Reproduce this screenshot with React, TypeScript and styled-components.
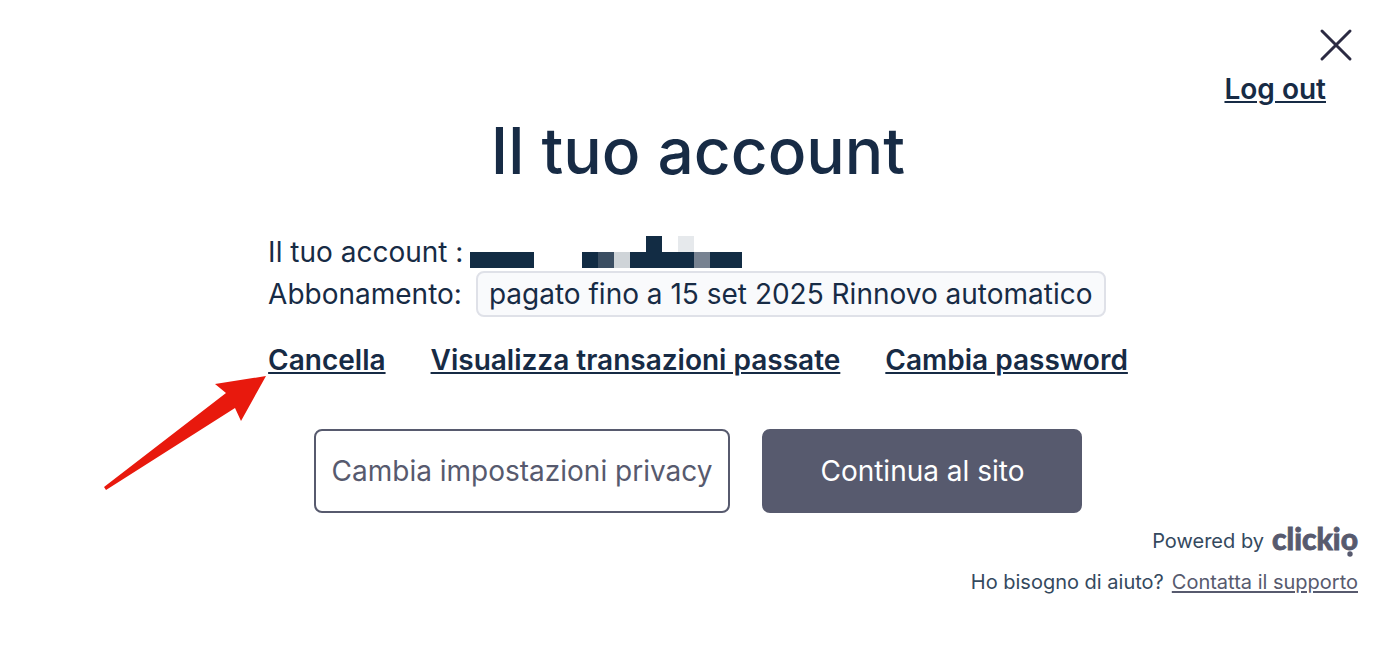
import React from "react";
import styled, { createGlobalStyle } from "styled-components";

const navy = "#172b45";
const slate = "#575a6e";

const GlobalStyle = createGlobalStyle`
  *, *::before, *::after { box-sizing: border-box; }
  body {
    margin: 0;
    background: #fff;
    color: ${navy};
    font-family: Inter, "Liberation Sans", sans-serif;
    font-size: 28px;
    line-height: 34px;
  }
`;

const Dialog = styled.main`
  display: flex;
  flex-direction: column;
  padding: 28px 24px 48px 38px;
`;

const TopBar = styled.header`
  display: flex;
  flex-direction: column;
  align-items: flex-end;
  gap: 10px;
`;

const CloseButton = styled.button`
  display: block;
  margin-right: 5px;
  padding: 0;
  border: 0;
  background: none;
  line-height: 0;
  cursor: pointer;
`;

const TextLink = styled.a`
  color: ${navy};
  font-weight: 600;
  text-decoration: underline;
  text-decoration-thickness: 2px;
  text-underline-offset: 2px;
  white-space: nowrap;
`;

const LogOut = styled(TextLink)`
  margin-right: 32px;
`;

const Title = styled.h1`
  margin: 6px 0 45px;
  font-size: 64px;
  font-weight: 500;
  line-height: 78px;
  text-align: center;
`;

const Account = styled.section`
  position: relative;
  display: flex;
  flex-direction: column;
  gap: 2px;
  align-self: center;
`;

const Row = styled.div`
  display: flex;
  align-items: center;
  white-space: nowrap;
`;

const Redacted = styled.svg`
  display: block;
  margin-left: 7px;
`;

const Status = styled.span`
  margin-left: 14px;
  padding: 4px 11px;
  border: 2px solid #dfe1e8;
  border-radius: 8px;
  background: #f9fafc;
`;

const Links = styled.nav`
  display: flex;
  gap: 45px;
  margin-top: 24px;
`;

const Pointer = styled.svg`
  position: absolute;
  right: 100%;
  bottom: -114px;
`;

const Actions = styled.div`
  display: flex;
  justify-content: center;
  gap: 32px;
  margin-top: 52px;
`;

const Button = styled.button<{ $filled?: boolean }>`
  min-width: 320px;
  padding: 23px 16px;
  border: 2px solid ${slate};
  border-radius: 8px;
  background: ${(p) => (p.$filled ? slate : "#fff")};
  color: ${(p) => (p.$filled ? "#fff" : slate)};
  font: inherit;
  cursor: pointer;
`;

const Footer = styled.footer`
  display: flex;
  flex-direction: column;
  align-items: flex-end;
  gap: 9px;
  margin-top: 10px;
  color: #34495e;
  font-size: 20px;
  line-height: 28px;
`;

const FooterLine = styled.div`
  display: flex;
  align-items: center;
  gap: 8px;
`;

const SupportLink = styled.a`
  color: ${slate};
  text-decoration: underline;
  text-decoration-thickness: 2px;
  text-underline-offset: 2px;
`;

const Brand = styled.svg`
  display: block;
  overflow: visible;
  fill: ${slate};
  font-family: Lato, sans-serif;
  font-size: 30px;
  font-weight: 900;
  line-height: 36px;
`;

const mosaic = [
  [0, 1, 4, "#122c44"],
  [7, 1, 1, "#122c44"],
  [8, 1, 1, "#3b4e62"],
  [9, 1, 1, "#cfd4d8"],
  [10, 1, 4, "#122c44"],
  [14, 1, 1, "#778291"],
  [15, 1, 2, "#122c44"],
  [11, 0, 1, "#122c44"],
  [13, 0, 1, "#e6e9ec"],
] as const;

export default function App() {
  return (
    <>
      <GlobalStyle />
      <Dialog>
        <TopBar>
          <CloseButton aria-label="Chiudi">
            <svg width="34" height="34" viewBox="0 0 34 34" fill="none" stroke="#2b2a42" strokeWidth="3" strokeLinecap="round">
              <path d="M3 3 31 31M31 3 3 31" />
            </svg>
          </CloseButton>
          <LogOut href="#logout">Log out</LogOut>
        </TopBar>
        <Title>Il tuo account</Title>
        <Account>
          <Row>
            <span>Il tuo account :</span>
            <Redacted width="272" height="32" viewBox="0 0 17 2" shapeRendering="crispEdges" aria-hidden="true">
              {mosaic.map(([x, y, w, fill]) => (
                <rect key={`${x}-${y}`} x={x} y={y} width={w} height="1" fill={fill} />
              ))}
            </Redacted>
          </Row>
          <Row>
            <span>Abbonamento:</span>
            <Status>pagato fino a 15 set 2025 Rinnovo automatico</Status>
          </Row>
          <Links>
            <TextLink href="#cancella">Cancella</TextLink>
            <TextLink href="#transazioni">Visualizza transazioni passate</TextLink>
            <TextLink href="#password">Cambia password</TextLink>
          </Links>
          <Pointer width="166" height="116" viewBox="0 0 166 116" fill="#e8190d" aria-hidden="true">
            <path d="M164 1 113 9 124 18 2 112 4 115 133 33 139 46Z" />
          </Pointer>
        </Account>
        <Actions>
          <Button>Cambia impostazioni privacy</Button>
          <Button $filled>Continua al sito</Button>
        </Actions>
        <Footer>
          <FooterLine>
            <span>Powered by</span>
            <Brand width="86" height="36" viewBox="0 0 86 36">
              <text x="0" y="27" stroke={slate} strokeWidth="0.8">clickio</text>
              <circle cx="78" cy="31" r="2.7" />
            </Brand>
          </FooterLine>
          <FooterLine>
            <span>Ho bisogno di aiuto?</span>
            <SupportLink href="#supporto">Contatta il supporto</SupportLink>
          </FooterLine>
        </Footer>
      </Dialog>
    </>
  );
}
